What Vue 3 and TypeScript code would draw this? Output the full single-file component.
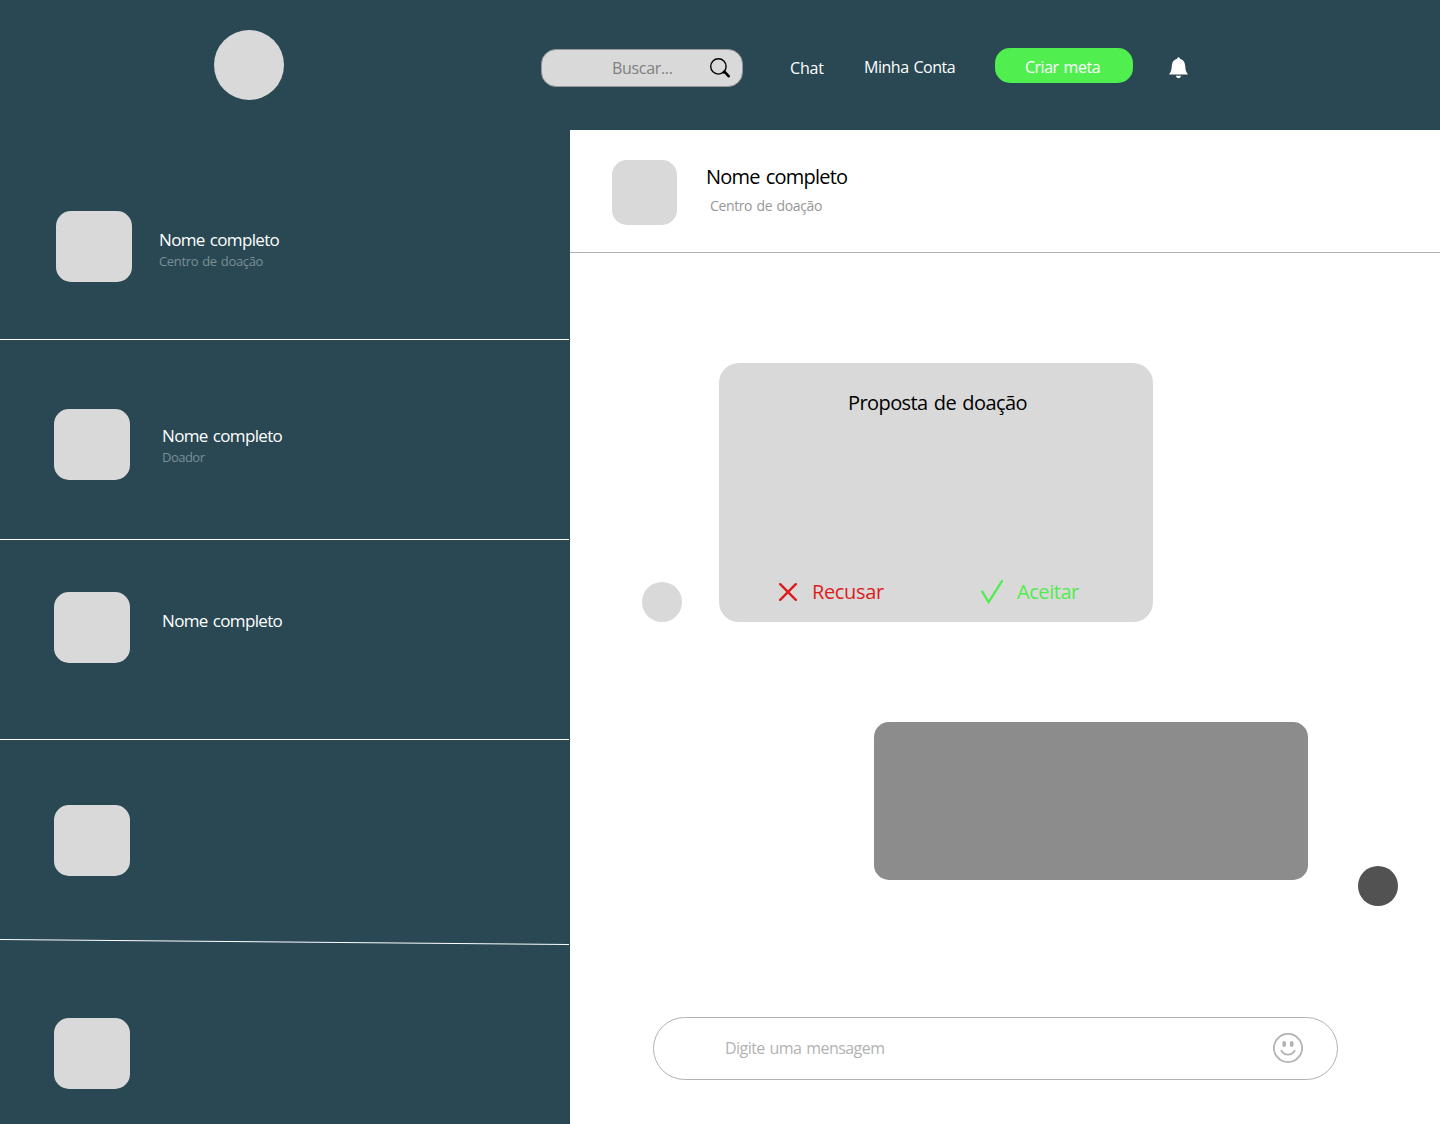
<script setup lang="ts">
interface Contact {
  id: string
  name?: string
  role?: string
}

const contacts: Contact[] = [
  { id: 'first', name: 'Nome completo', role: 'Centro de doação' },
  { id: 'second', name: 'Nome completo', role: 'Doador' },
  { id: 'third', name: 'Nome completo' },
  { id: 'fourth' },
  { id: 'fifth' },
]
</script>

<template>
  <div class="page">
    <header class="topbar">
      <div class="logo"></div>
      <label class="search">
        <input class="search-input" type="text" placeholder="Buscar..." />
        <svg class="search-icon" viewBox="0 0 20 21" width="20" height="21">
          <circle cx="8.4" cy="8.4" r="7.7" fill="none" stroke="#000" stroke-width="1.4" />
          <path d="M13.7 14.4 L14.4 13.7 L18.6 18.2" fill="none" stroke="#000" stroke-width="2.6" stroke-linecap="round" stroke-linejoin="round" />
        </svg>
      </label>
      <a class="nav chat">Chat</a>
      <a class="nav account">Minha Conta</a>
      <button class="create">Criar meta</button>
      <svg class="bell" viewBox="0 0 20 22" width="20" height="22">
        <path d="M8 2.1 Q8.1 .3 9.5 .3 Q10.9 .3 11 2.1 C14.6 2.8 15.8 5.5 16.2 9 C16.5 13 17 15 18.8 17.3 L18.8 17.6 H.2 L.2 17.3 C2 15 2.5 13 2.8 9 C3.2 5.5 4.4 2.8 8 2.1 Z" fill="#fff" />
        <path d="M6.8 18.8 H12.2 Q11.7 21.2 9.5 21.2 Q7.3 21.2 6.8 18.8 Z" fill="#fff" />
      </svg>
    </header>

    <div class="body">
      <aside class="contacts">
        <div v-for="c in contacts" :key="c.id" class="contact" :class="c.id">
          <div class="avatar"></div>
          <div v-if="c.name" class="info">
            <div class="name">{{ c.name }}</div>
            <div v-if="c.role" class="role">{{ c.role }}</div>
          </div>
          <svg v-if="c.id === 'fourth'" class="slant" viewBox="0 0 569 7" width="569" height="7">
            <line x1="0" y1="0.5" x2="569" y2="5.5" stroke="#fff" stroke-width="1" />
          </svg>
        </div>
      </aside>

      <main class="conversation">
        <div class="chat-head">
          <div class="head-avatar"></div>
          <div class="head-info">
            <div class="head-name">Nome completo</div>
            <div class="head-role">Centro de doação</div>
          </div>
        </div>

        <div class="received">
          <div class="dot"></div>
          <section class="proposal">
            <h2 class="proposal-title">Proposta de doação</h2>
            <div class="actions">
              <button class="action refuse">
                <svg viewBox="0 0 18 18" width="18" height="18">
                  <path d="M1.2 1.2 L16.8 16.8 M16.8 1.2 L1.2 16.8" stroke="#dc1c1c" stroke-width="2.4" stroke-linecap="round" />
                </svg>
                <span class="label">Recusar</span>
              </button>
              <button class="action accept">
                <svg viewBox="0 0 24 26" width="24" height="26">
                  <path d="M2.1 12.4 L8.6 23.2 L22.1 1.9" fill="none" stroke="#51ec4d" stroke-width="2.2" stroke-linecap="round" />
                </svg>
                <span class="label">Aceitar</span>
              </button>
            </div>
          </section>
        </div>

        <div class="sent">
          <div class="bubble"></div>
          <div class="dot dark"></div>
        </div>

        <label class="composer">
          <input class="composer-input" type="text" placeholder="Digite uma mensagem" />
          <svg viewBox="0 0 30 30" width="30" height="30">
            <circle cx="15" cy="15" r="14.1" fill="none" stroke="#b2b2b2" stroke-width="1.8" />
            <ellipse cx="11.2" cy="11" rx="1.9" ry="2.9" fill="#b2b2b2" />
            <ellipse cx="18.7" cy="11" rx="1.9" ry="2.9" fill="#b2b2b2" />
            <path d="M8.4 17.7 A7.6 7.6 0 0 0 21.6 17.7" fill="none" stroke="#b2b2b2" stroke-width="1.8" stroke-linecap="round" />
          </svg>
        </label>
      </main>
    </div>
  </div>
</template>

<style>
body {
  margin: 0;
}
</style>

<style scoped>
.page {
  width: 1440px;
  height: 1124px;
  overflow: hidden;
  background: #294853;
  font-family: "Open Sans", "Liberation Sans", sans-serif;
  font-size: 16px;
  line-height: 20px;
  color: #fff;
}
.page * {
  box-sizing: border-box;
  letter-spacing: -0.035em;
  word-spacing: 0.08em;
}
button,
input {
  margin: 0;
  padding: 0;
  border: 0;
  outline: 0;
  background: none;
  font: inherit;
}
svg {
  display: block;
  flex: none;
}
.topbar {
  display: flex;
  align-items: flex-start;
  height: 130px;
  padding-left: 214px;
}
.logo {
  width: 70px;
  height: 70px;
  margin-top: 30px;
  border-radius: 50%;
  background: #d9d9d9;
}
.search {
  display: flex;
  width: 202px;
  height: 38px;
  margin: 49px 0 0 257px;
  padding: 8px 0 0 70px;
  border: 1px solid #979797;
  border-radius: 15px;
  background: #d9d9d9;
}
.page .search-input {
  width: 98px;
  height: 20px;
  letter-spacing: -0.02em;
}
.search-input::placeholder {
  color: #7f7f7f;
  opacity: 1;
}
.nav {
  white-space: nowrap;
}
.page .chat {
  width: 74px;
  margin: 58px 0 0 47px;
  letter-spacing: -0.01em;
}
.page .account {
  width: 131px;
  margin-top: 57px;
  letter-spacing: -0.03em;
}
.page .create {
  width: 138px;
  height: 35px;
  margin-top: 48px;
  padding: 2px 3px 0 0;
  border-radius: 15px;
  background: #51ee50;
  color: #fff;
  letter-spacing: -0.03em;
}
.bell {
  margin: 57px 0 0 36px;
}
.body {
  display: flex;
  height: 994px;
}
.contacts {
  width: 570px;
  padding-right: 1px;
}
.contact {
  display: flex;
  flex-wrap: wrap;
  align-content: flex-start;
  height: 200px;
  padding-left: 54px;
  border-bottom: 1px solid #fff;
}
.avatar {
  width: 76px;
  height: 71px;
  border-radius: 15px;
  background: #d9d9d9;
}
.info {
  margin: 17px 0 0 32px;
}
.page .name {
  font-size: 17px;
  letter-spacing: -0.039em;
}
.page .role {
  margin-top: 3px;
  font-size: 13px;
  line-height: 16px;
  color: #7b8e95;
  letter-spacing: -0.027em;
}
.first {
  height: 210px;
  padding: 81px 0 0 56px;
}
.first .info {
  margin: 19px 0 0 27px;
}
.second {
  padding-top: 69px;
}
.page .second .role {
  letter-spacing: -0.04em;
}
.third {
  padding-top: 52px;
}
.third .info {
  margin-top: 19px;
}
.fourth {
  padding-top: 65px;
  border: 0;
}
.slant {
  margin: 63px 0 0 -54px;
}
.fifth {
  height: 184px;
  padding-top: 78px;
  border: 0;
}
.conversation {
  width: 870px;
  background: #fff;
  color: #000;
}
.chat-head {
  display: flex;
  height: 123px;
  padding: 30px 0 0 42px;
  border-bottom: 1px solid #b2b2b2;
}
.head-avatar {
  width: 65px;
  height: 65px;
  border-radius: 15px;
  background: #d9d9d9;
}
.head-info {
  margin: 5px 0 0 29px;
}
.page .head-name {
  font-size: 20px;
  line-height: 24px;
  letter-spacing: -0.039em;
}
.page .head-role {
  margin: 9px 0 0 4px;
  font-size: 14px;
  line-height: 16px;
  color: #979797;
  letter-spacing: -0.027em;
}
.received {
  display: flex;
  align-items: flex-end;
  margin: 110px 0 0 72px;
}
.dot {
  width: 40px;
  height: 40px;
  border-radius: 50%;
  background: #d9d9d9;
}
.proposal {
  width: 434px;
  height: 259px;
  margin-left: 37px;
  padding-top: 28px;
  border-radius: 20px;
  background: #d9d9d9;
}
.page .proposal-title {
  margin: 0 0 0 129px;
  font-size: 20px;
  font-weight: 400;
  line-height: 24px;
  letter-spacing: -0.029em;
}
.actions {
  display: flex;
  height: 26px;
  margin: 164px 0 0 60px;
}
.action {
  display: flex;
  align-items: center;
  font-size: 20px;
  line-height: 24px;
}
.refuse {
  width: 201px;
  gap: 15px;
  color: #dc1c1c;
}
.accept {
  gap: 13px;
  color: #51ec4d;
}
.page .refuse .label {
  letter-spacing: -0.018em;
}
.page .accept .label {
  letter-spacing: -0.022em;
}
.sent {
  display: flex;
  align-items: flex-start;
  margin: 100px 0 0 304px;
}
.bubble {
  width: 434px;
  height: 158px;
  border-radius: 15px;
  background: #8c8c8c;
}
.dark {
  margin: 144px 0 0 50px;
  background: #525252;
}
.composer {
  display: flex;
  align-items: flex-start;
  width: 685px;
  height: 63px;
  margin: 111px 0 0 83px;
  padding: 15px 0 0 71px;
  border: 1px solid #b2b2b2;
  border-radius: 32px;
}
.composer-input {
  width: 548px;
  height: 20px;
  margin-top: 5px;
}
.composer-input::placeholder {
  color: #b2b2b2;
  opacity: 1;
}
</style>
